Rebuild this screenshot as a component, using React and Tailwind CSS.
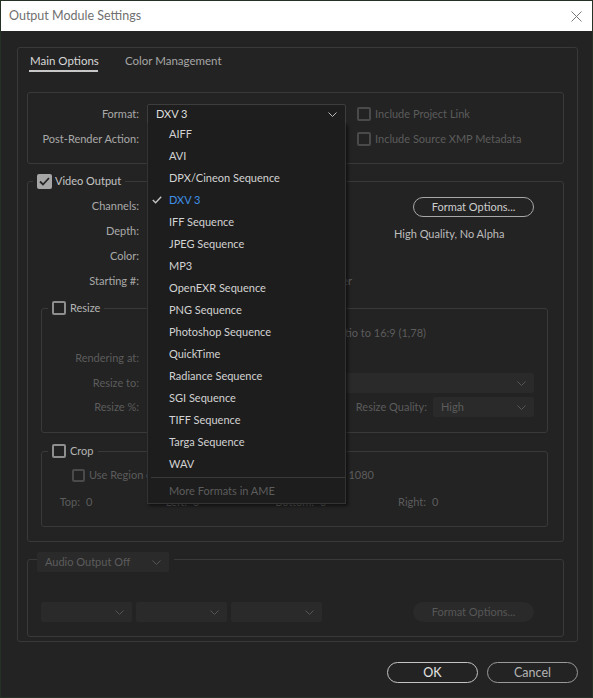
import React from 'react';

const formats = [
  'AIFF', 'AVI', 'DPX/Cineon Sequence', 'DXV 3', 'IFF Sequence', 'JPEG Sequence', 'MP3',
  'OpenEXR Sequence', 'PNG Sequence', 'Photoshop Sequence', 'QuickTime', 'Radiance Sequence',
  'SGI Sequence', 'TIFF Sequence', 'Targa Sequence', 'WAV',
];

function Chevron({ className }) {
  return (
    <svg width="9" height="5" viewBox="0 0 9 5" className={className}>
      <polyline points="0.5,0.5 4.5,4.5 8.5,0.5" fill="none" stroke="currentColor" strokeWidth="1" />
    </svg>
  );
}

function Box({ kind = 'off', size = 14 }) {
  if (kind === 'on') {
    return (
      <span className="flex h-[15px] w-[15px] items-center justify-center rounded-[2px] bg-[#a6a6a6]">
        <svg width="11" height="9" viewBox="0 0 11 9">
          <polyline points="1,4.5 4,7.5 10,1" fill="none" stroke="#262626" strokeWidth="1.8" />
        </svg>
      </span>
    );
  }
  const cls = kind === 'dim' ? 'border-[#4a4a4a]' : 'border-[#8e8e8e]';
  return <span style={{ width: size, height: size }} className={`block rounded-[2px] border-2 ${cls}`} />;
}

function Select({ w, text, dark, color = 'text-[#5c5c5c]' }) {
  return (
    <div
      style={{ width: w }}
      className={`flex h-[20px] items-center justify-between pl-[8px] pr-[8px] ${
        dark ? 'rounded-t-[2px] border border-[#3d3d3d] bg-[#1e1e1e] text-[#dcdcdc]' : `rounded-[2px] bg-[#2a2a2a] ${color}`
      }`}
    >
      <span>{text}</span>
      <Chevron className={dark ? 'text-[#bdbdbd]' : 'text-[#555555]'} />
    </div>
  );
}

function Label({ w, children, dim }) {
  return (
    <span style={{ width: w }} className={`block text-right ${dim ? 'text-[#5c5c5c]' : 'text-[#a9a9a9]'}`}>
      {children}
    </span>
  );
}

export default function App() {
  return (
    <div className="relative flex h-[698px] w-[593px] flex-col overflow-hidden border border-[#263126] bg-[#232323] font-[Lato,sans-serif] text-[11px] leading-[16px]">
      {/* title bar */}
      <div className="flex h-[30px] items-center justify-between bg-white pl-[8px] pr-[10px]">
        <span className="text-[12.5px] text-[#707070]">Output Module Settings</span>
        <svg width="11" height="11" viewBox="0 0 11 11">
          <path d="M0.5 0.5 L10.5 10.5 M10.5 0.5 L0.5 10.5" stroke="#7a7a7a" strokeWidth="1" />
        </svg>
      </div>

      <div className="flex flex-1 flex-col pl-[16px] pt-[16px]">
        <div className="flex h-[595px] w-[561px] flex-col rounded-[3px] border border-[#393939]">
          {/* tabs */}
          <div className="flex h-[24px] gap-[27px] whitespace-nowrap pl-[11px] text-[11.5px]">
            <span className="w-[69px] border-b-2 border-[#c8c8c8] pb-[3px] pl-[1px] pt-[5px] text-[#d8d8d8]">Main Options</span>
            <span className="pt-[5px] text-[#a6a6a6]">Color Management</span>
          </div>

          {/* format group */}
          <div className="ml-[9px] mt-[20px] flex h-[72px] w-[537px] flex-col gap-[5px] rounded-[3px] border border-[#393939] pt-[11px]">
            <div className="flex h-[20px] items-center">
              <Label w={111}>Format:</Label>
              <div className="ml-[8px]">
                <Select w={199} text="DXV 3" dark />
              </div>
              <div className="ml-[11px] flex items-center gap-[4px] text-[#5c5c5c]">
                <Box kind="dim" size={14} />
                <span>Include Project Link</span>
              </div>
            </div>
            <div className="flex h-[20px] items-center">
              <Label w={111}>Post-Render Action:</Label>
              <div className="ml-[8px]">
                <Select w={199} text="None" />
              </div>
              <div className="ml-[11px] flex items-center gap-[4px] text-[#5c5c5c]">
                <Box kind="dim" size={14} />
                <span>Include Source XMP Metadata</span>
              </div>
            </div>
          </div>

          {/* video output */}
          <fieldset className="ml-[9px] mt-[9px] h-[369px] w-[537px] rounded-[3px] border border-[#393939]">
            <legend className="ml-[5px] flex h-[16px] items-center gap-[3px] px-[4px] text-[#c4c4c4]">
              <Box kind="on" />
              <span>Video Output</span>
            </legend>
            <div className="flex pt-[7px]">
              <div className="flex w-[366px] flex-col gap-[5px]">
                <div className="flex h-[20px] items-center">
                  <Label w={111}>Channels:</Label>
                  <div className="ml-[8px]"><Select w={150} text="RGB" /></div>
                </div>
                <div className="flex h-[20px] items-center">
                  <Label w={111}>Depth:</Label>
                  <div className="ml-[8px]"><Select w={150} text="Millions of Colors" /></div>
                </div>
                <div className="flex h-[20px] items-center">
                  <Label w={111}>Color:</Label>
                  <div className="ml-[8px]"><Select w={150} text="Premultiplied (Matted)" /></div>
                </div>
                <div className="flex h-[20px] items-center">
                  <Label w={111}>Starting #:</Label>
                  <div className="ml-[8px] flex w-[205px] items-center justify-between">
                    <span className="h-[20px] w-[46px] rounded-[2px] bg-[#2a2a2a]" />
                    <span className="flex items-center gap-[4px] text-[#5c5c5c]">
                      <Box kind="dim" size={13} />
                      Use Comp Frame Number
                    </span>
                  </div>
                </div>
              </div>
              <div className="flex flex-col">
                <div className="ml-[19px] mt-[1px] flex h-[20px] w-[121px] items-center justify-center rounded-full border border-[#a8a8a8] text-[#cdcdcd]">
                  Format Options...
                </div>
                <span className="mt-[9px] text-[#bdbdbd]">High Quality, No Alpha</span>
              </div>
            </div>

            {/* resize */}
            <fieldset className="ml-[13px] mt-[9px] h-[133px] w-[507px] rounded-[3px] border border-[#393939]">
              <legend className="ml-[6px] flex h-[16px] items-center gap-[4px] px-[4px] text-[#b4b4b4]">
                <Box size={14} />
                <span>Resize</span>
              </legend>
              <div className="flex flex-col pt-[9px]">
                <div className="flex h-[16px] w-[384px] items-center justify-end gap-[4px] text-[#5c5c5c]">
                  <Box kind="dim" size={13} />
                  <span>Lock Aspect Ratio to 16:9 (1,78)</span>
                </div>
                <div className="mt-[9px] flex h-[16px] items-center">
                  <Label w={97} dim>Rendering at:</Label>
                  <span className="ml-[8px] text-[#5c5c5c]">1920 x 1080</span>
                </div>
                <div className="mt-[7px] flex h-[20px] items-center">
                  <Label w={97} dim>Resize to:</Label>
                  <div className="ml-[8px]"><Select w={387} text="Custom" /></div>
                </div>
                <div className="mt-[4px] flex h-[20px] items-center">
                  <Label w={97} dim>Resize %:</Label>
                  <div className="ml-[8px] w-[198px] text-[#5c5c5c]">x</div>
                  <Label w={82} dim>Resize Quality:</Label>
                  <div className="ml-[6px]"><Select w={101} text="High" /></div>
                </div>
              </div>
            </fieldset>

            {/* crop */}
            <fieldset className="ml-[13px] mt-[10px] h-[84px] w-[507px] rounded-[3px] border border-[#393939]">
              <legend className="ml-[6px] flex h-[16px] items-center gap-[4px] px-[4px] text-[#b4b4b4]">
                <Box size={14} />
                <span>Crop</span>
              </legend>
              <div className="flex flex-col pt-[8px]">
                <div className="flex h-[16px] w-[332px] items-center justify-between pl-[30px] text-[#5c5c5c]">
                  <span className="flex items-center gap-[4px]">
                    <Box kind="dim" size={13} />
                    Use Region of Interest
                  </span>
                  <span>Final Size: 1920 x 1080</span>
                </div>
                <div className="mt-[11px] flex h-[16px] items-center text-[#5c5c5c]">
                  <Label w={38} dim>Top:</Label>
                  <span className="ml-[6px] w-[34px]">0</span>
                  <Label w={67} dim>Left:</Label>
                  <span className="ml-[6px] w-[37px]">0</span>
                  <Label w={84} dim>Bottom:</Label>
                  <span className="ml-[6px] w-[30px]">0</span>
                  <Label w={76} dim>Right:</Label>
                  <span className="ml-[6px]">0</span>
                </div>
              </div>
            </fieldset>
          </fieldset>

          {/* audio output */}
          <fieldset className="ml-[9px] mt-[10px] h-[85px] w-[537px] rounded-[3px] border border-[#393939]">
            <legend className="ml-[9px] h-[14px] pr-[5px]">
              <Select w={132} text="Audio Output Off" />
            </legend>
            <div className="flex items-center gap-[4px] pl-[13px] pt-[36px]">
              <Select w={91} text="" />
              <Select w={91} text="" />
              <Select w={91} text="" />
              <div className="ml-[87px] flex h-[20px] w-[121px] items-center justify-center rounded-full bg-[#2a2a2a] text-[#575757]">
                Format Options...
              </div>
            </div>
          </fieldset>
        </div>

        {/* buttons */}
        <div className="mt-[20px] flex w-[561px] justify-end gap-[9px]">
          <div className="flex h-[21px] w-[91px] items-center justify-center rounded-full border-[1.5px] border-[#c4c4c4] text-[12.5px] text-[#e6e6e6]">
            OK
          </div>
          <div className="flex h-[21px] w-[91px] items-center justify-center rounded-full border-[1.5px] border-[#9a9a9a] text-[12.5px] text-[#b4b4b4]">
            Cancel
          </div>
        </div>
      </div>

      {/* open format menu */}
      <div className="absolute left-[146px] top-[122px] w-[199px] border border-t-0 border-[#333333] bg-[#1d1d1d] pb-[1px] shadow-[2px_2px_3px_rgba(0,0,0,0.55)]">
        {formats.map((f) => (
          <div
            key={f}
            className={`relative flex h-[22px] items-center pl-[21px] ${f === 'DXV 3' ? 'text-[#3f90e8]' : 'text-[#d2d2d2]'}`}
          >
            {f === 'DXV 3' && (
              <svg width="10" height="8" viewBox="0 0 10 8" className="absolute left-[4px] top-[7px]">
                <polyline points="0.8,4 3.6,6.8 9.2,0.8" fill="none" stroke="#c4c4c4" strokeWidth="1.4" />
              </svg>
            )}
            {f}
          </div>
        ))}
        <div className="ml-[3px] mt-[2px] h-px bg-[#3a3a3a]" />
        <div className="mt-[2px] flex h-[22px] items-center pl-[21px] text-[#5c5c5c]">More Formats in AME</div>
      </div>
    </div>
  );
}
